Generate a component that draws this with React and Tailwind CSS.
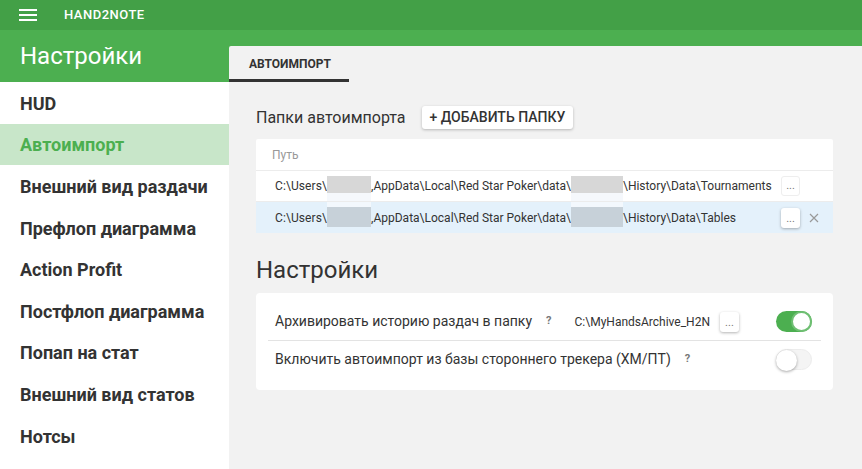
import React from 'react';

const navItems = [
  'HUD',
  'Автоимпорт',
  'Внешний вид раздачи',
  'Префлоп диаграмма',
  'Action Profit',
  'Постфлоп диаграмма',
  'Попап на стат',
  'Внешний вид статов',
  'Нотсы',
];

const Censor = ({ w, selected }) => (
  <span className="inline-flex flex-col self-stretch" style={{ width: w }}>
    {selected ? (
      <>
        <span className="h-[5px] bg-[#f3f8fd]" />
        <span className="h-[20px] bg-[#c7d1d9]" />
        <span className="flex-1" />
      </>
    ) : (
      <>
        <span className="h-[5px]" />
        <span className="h-[17px] bg-[#d7d7d7]" />
        <span className="flex-1 bg-[#f5f8fc]" />
      </>
    )}
  </span>
);

const DotsButton = ({ raised }) => (
  <button
    className={`w-[19px] h-[20px] rounded-[3px] bg-white text-[11px] leading-none text-[#777] flex items-end justify-center pb-[4px] ${
      raised ? 'shadow-[0_1px_3px_rgba(0,0,0,0.3)]' : 'border border-[#eeeeee]'
    }`}
  >
    ...
  </button>
);

const PathRow = ({ tail, selected }) => (
  <div
    className={`h-[31px] flex items-stretch pl-[19px] pr-[10px] text-[12px] text-[#333] ${
      selected ? 'bg-[#e4f1fb]' : 'bg-white border-b border-[#ececec]'
    }`}
  >
    <span className="flex items-center tracking-[0.1px]">C:\Users\</span>
    <Censor w="44px" selected={selected} />
    <span className="flex items-center">,AppData\Local\Red Star Poker\data\</span>
    <Censor w="52px" selected={selected} />
    <span className="flex items-center">\History\Data\{tail}</span>
    <div className="flex-1" />
    <div className="flex items-center gap-[9px] w-[42px]">
      <DotsButton raised={selected} />
      {selected && (
        <svg width="10" height="10" viewBox="0 0 10 10" className="stroke-[#999]">
          <path d="M1 1L9 9M9 1L1 9" strokeWidth="1.2" />
        </svg>
      )}
    </div>
  </div>
);

const Toggle = ({ on }) => (
  <div
    className={`w-[36px] h-[21px] rounded-full relative ${
      on ? 'bg-[#4caf50]' : 'bg-[#f4f4f4] border border-[#ececec]'
    }`}
  >
    <div
      className={`absolute top-[0px] w-[21px] h-[21px] rounded-full bg-white ${
        on ? 'right-0 border-2 border-[#6fbf73]' : '-left-px -top-px shadow-[0_1px_3px_rgba(0,0,0,0.35)]'
      }`}
    />
  </div>
);

export default function App() {
  return (
    <div className="w-[862px] h-[469px] overflow-hidden flex flex-col font-['Roboto',sans-serif] text-[#333]">
      {/* top bar */}
      <div className="h-[30px] bg-[#43a047] flex items-center shrink-0">
        <div className="ml-[19px] flex flex-col gap-[3px]">
          <span className="block w-[18px] h-[2px] bg-white" />
          <span className="block w-[18px] h-[2px] bg-white" />
          <span className="block w-[18px] h-[2px] bg-white" />
        </div>
        <span className="ml-[27px] text-white text-[13px] font-medium tracking-[0.5px]">HAND2NOTE</span>
      </div>

      <div className="flex flex-1 min-h-0">
        {/* sidebar */}
        <div className="w-[229px] flex flex-col shrink-0">
          <div className="h-[52px] bg-[#4caf50] flex items-center px-[20px] text-white text-[24px]">
            Настройки
          </div>
          <div className="flex-1 bg-white">
            {navItems.map((item, i) => (
              <div
                key={item}
                className={`h-[41.6px] flex items-center px-[20px] pt-[1px] text-[18px] font-bold ${
                  i === 1 ? 'bg-[#c8e6c9] text-[#4caf50]' : 'text-[#333]'
                }`}
              >
                {item}
              </div>
            ))}
          </div>
        </div>

        {/* main */}
        <div className="flex-1 flex flex-col bg-[#4caf50] pt-[16px]">
          <div className="flex-1 bg-[#f2f2f2] rounded-tl-[2px] flex flex-col">
            <div className="h-[36px] flex shrink-0">
              <div className="w-[120px] flex items-center pl-[20px] border-b-[3px] border-[#333] text-[12px] font-bold pt-[2px]">
                АВТОИМПОРТ
              </div>
            </div>

            <div className="pl-[27px] pr-[29px]">
              <div className="mt-[24px] flex items-center h-[23px]">
                <span className="text-[16px] text-[#333]">Папки автоимпорта</span>
                <button className="ml-[16px] h-[23px] px-[8px] bg-white rounded-[3px] shadow-[0_1px_3px_rgba(0,0,0,0.25)] text-[14px] font-medium text-[#333]">
                  + ДОБАВИТЬ ПАПКУ
                </button>
              </div>

              <div className="mt-[10px] bg-white rounded-[2px]">
                <div className="h-[32px] flex items-center pl-[16px] text-[12px] text-[#999] border-b border-[#ececec]">
                  Путь
                </div>
                <PathRow tail="Tournaments" />
                <PathRow tail="Tables" selected />
              </div>

              <div className="mt-[21px] h-[32px] flex items-center text-[24px] text-[#333]">Настройки</div>

              <div className="mt-[7px] bg-white rounded-[4px] px-[12px] pt-[10px] pb-[12px]">
                <div className="h-[38px] flex items-center border-b border-[#e3e3e3] pl-[7px] pr-[9px]">
                  <span className="text-[14px]">Архивировать историю раздач в папку</span>
                  <span className="ml-[14px] text-[11px] font-bold text-[#777]">?</span>
                  <span className="ml-[23px] text-[12px]">C:\MyHandsArchive_H2N</span>
                  <span className="ml-[10px]">
                    <DotsButton raised />
                  </span>
                  <div className="flex-1" />
                  <Toggle on />
                </div>
                <div className="h-[37px] flex items-center pl-[7px] pr-[9px]">
                  <span className="text-[14px]">Включить автоимпорт из базы стороннего трекера (ХМ/ПТ)</span>
                  <span className="ml-[14px] text-[11px] font-bold text-[#777]">?</span>
                  <div className="flex-1" />
                  <Toggle />
                </div>
              </div>
            </div>
          </div>
        </div>
      </div>
    </div>
  );
}
